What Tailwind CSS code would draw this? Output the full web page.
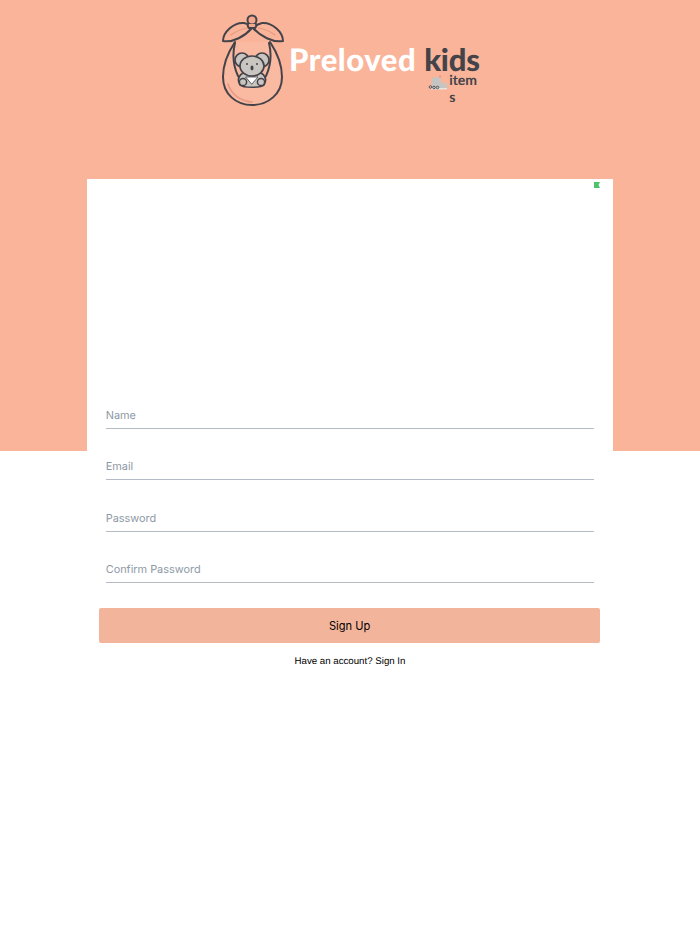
<!doctype html>
<html lang="en">
<head>
<meta charset="utf-8">
<title>Sign Up</title>
<script src="https://cdn.jsdelivr.net/npm/@tailwindcss/browser@4"></script>
</head>
<body class="bg-white font-['Inter',sans-serif] [text-rendering:geometricPrecision]">
<div class="h-[934px] w-[700px] overflow-hidden">
  <header class="h-[451px] bg-[#f9b499] pt-[12px] pl-[221px]">
    <div class="flex items-start">
      <svg class="w-[64px] h-[95px] shrink-0" viewBox="0 0 64 95" fill="none" stroke="#44434a" stroke-width="2" stroke-linecap="round" stroke-linejoin="round">
        <path d="M14 30C6 42 2 54 2 65c0 17 13 28 29 28s30-11 30-28c0-11-4-23-12-35" fill="#fab9a1"/>
        <path d="M7 72c3 10 12 17 24 18" stroke="#e89a84" stroke-width="1.6"/>
        <path d="M14 31c-3 12-2 22 3 33M48 31c3 12 2 22-3 33"/>
        <path d="M2 29C2 20 13 10 23 11c4 1 7 3 8 5C24 24 12 31 2 29Z" fill="#f9b499"/>
        <path d="M62 29C62 20 51 10 41 11c-4 1-7 3-9 5 7 8 20 15 30 13Z" fill="#f9b499"/>
        <path d="M10 23c5-4 11-6 17-7M37 16c6 1 12 3 17 7" stroke="#e59a84" stroke-width="1.2"/>
        <circle cx="31" cy="8" r="4.5" fill="#f4a98f"/>
        <path d="M27 12c-1 2 0 3 1 4h6c1-1 2-2 1-4" fill="#f4a98f"/>
        <circle cx="21" cy="48" r="7" fill="#c9c6c1" stroke-width="1.7"/>
        <circle cx="41" cy="48" r="7" fill="#c9c6c1" stroke-width="1.7"/>
        <path d="M19 73c-5-9 3-14 12-14s17 5 12 14c-3 3-21 3-24 0Z" fill="#c9c6c1" stroke-width="1.7"/>
        <ellipse cx="31" cy="54" rx="12" ry="10" fill="#c9c6c1" stroke-width="1.7"/>
        <path d="M25 65h12l-6 7Z" fill="#fff" stroke-width="0.8"/>
        <circle cx="22" cy="70" r="3.6" fill="#c9c6c1" stroke-width="1.5"/>
        <circle cx="40" cy="70" r="3.6" fill="#c9c6c1" stroke-width="1.5"/>
        <ellipse cx="31" cy="56" rx="1.5" ry="2.4" fill="#44434a" stroke="none"/>
        <circle cx="26" cy="52" r="1" fill="#44434a" stroke="none"/>
        <circle cx="36" cy="52" r="1" fill="#44434a" stroke="none"/>
      </svg>
      <div class="ml-[4px] mt-[34px] flex font-['Lato',sans-serif] font-black text-[31px] leading-[26px] whitespace-nowrap">
        <span class="text-white tracking-[0.55px]">Preloved</span>
        <div class="ml-[8px] flex flex-col text-[#44434a]">
          <span class="tracking-[-0.2px]">kids</span>
          <div class="flex ml-[4px]">
            <svg class="w-[20px] h-[18px] mt-[3px]" viewBox="0 0 20 18">
              <path d="M4 3c2-1 6-1 8-1l1 5 6 2v5H3Z" fill="#c6c5c2"/>
              <path d="M3 13h16v1.5H3Z" fill="#e6e5e2"/>
              <circle cx="2.5" cy="12" r="1.3" fill="none" stroke="#55555c"/>
              <circle cx="6" cy="12.5" r="1.3" fill="none" stroke="#55555c"/>
              <circle cx="9.5" cy="12.5" r="1.3" fill="none" stroke="#55555c"/>
              <circle cx="12" cy="1.5" r="1" fill="#f08f7a"/>
            </svg>
            <span class="ml-[1px] w-[31px] text-[14px] leading-[16.5px] font-bold whitespace-normal break-all">items</span>
          </div>
        </div>
      </div>
    </div>
  </header>
  <main class="relative -mt-[272px] ml-[87.4px] w-[525.2px] bg-white">
    <div class="flex h-[215.4px] justify-end pt-[3px] pr-[12.6px]">
      <svg class="w-[6px] h-[6px]" viewBox="0 0 6 6"><path d="M0 0h6L4.5 3 6 6H0Z" fill="#4ec46a"/></svg>
    </div>
    <form class="flex flex-col">
      <div class="mx-[18.3px] h-[34.5px] border-b border-[#b4bbc4] text-[10.9px] leading-[20px] text-[#8e99a6] pt-[10.5px]">Name</div>
      <div class="mx-[18.3px] mt-[17px] h-[34.5px] border-b border-[#b4bbc4] text-[10.9px] leading-[20px] text-[#8e99a6] pt-[10.5px]">Email</div>
      <div class="mx-[18.3px] mt-[17px] h-[34.5px] border-b border-[#b4bbc4] text-[10.9px] leading-[20px] text-[#8e99a6] pt-[10.5px]">Password</div>
      <div class="mx-[18.3px] mt-[17px] h-[34.5px] border-b border-[#b4bbc4] text-[10.9px] leading-[20px] text-[#8e99a6] pt-[10.5px]">Confirm Password</div>
      <button type="button" class="ml-[11.6px] mr-[12.4px] mt-[25px] h-[34.4px] rounded-[2px] bg-[#f3b49c] pt-[1px] text-[11.1px] text-black">Sign Up</button>
      <p class="mt-[12.6px] text-center font-['Liberation_Sans',sans-serif] text-[9.7px] leading-[14px] text-black">Have an account? Sign In</p>
    </form>
  </main>
</div>
</body>
</html>
